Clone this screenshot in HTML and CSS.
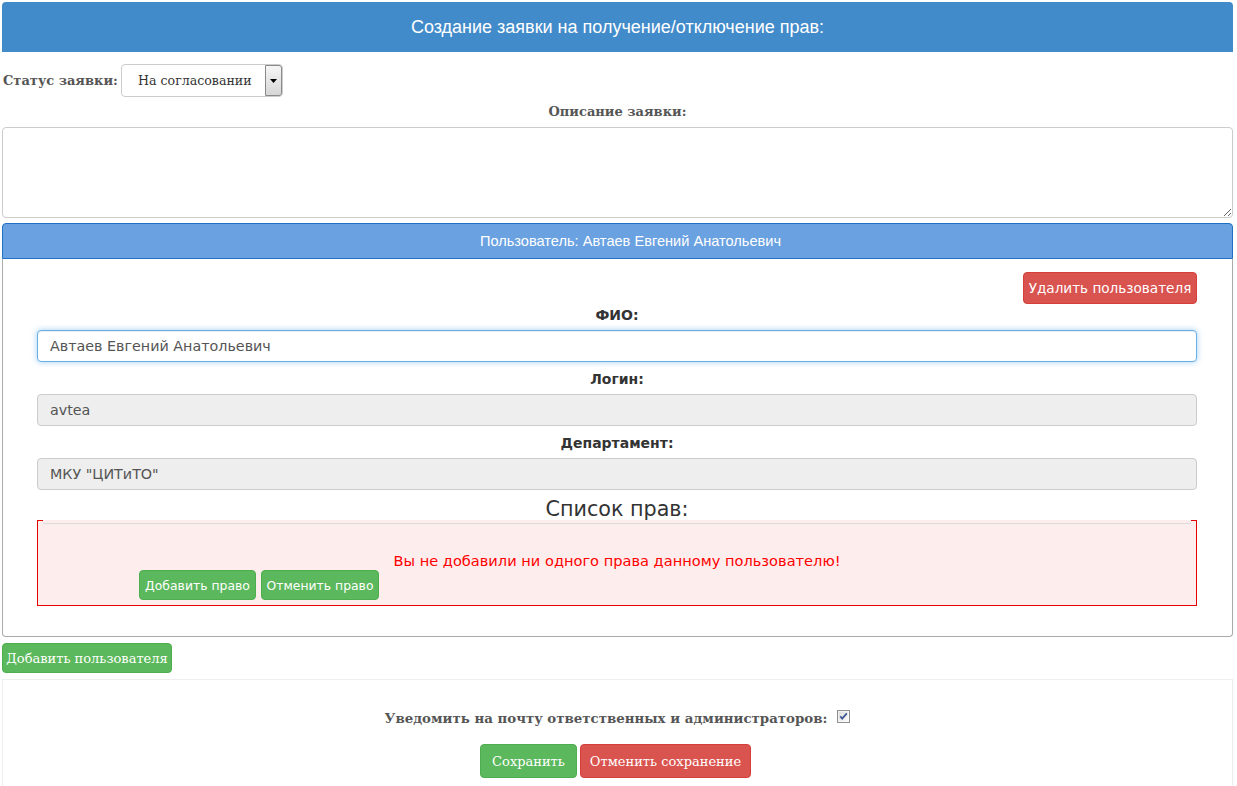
FILE: index.html
```html
<!DOCTYPE html>
<html lang="ru">
<head>
<meta charset="utf-8">
<title>Создание заявки</title>
<link rel="stylesheet" href="styles.css">
</head>
<body>
<div class="page">
  <div class="title-bar">Создание заявки на получение/отключение прав:</div>

  <div class="status-row">
    <span class="status-label">Статус заявки:</span>
    <div class="select">
      <span class="select-text">На согласовании</span>
      <span class="select-arrow"><svg width="7" height="4" viewBox="0 0 7 4"><path d="M0 0H7L3.5 4Z" fill="#000"/></svg></span>
    </div>
  </div>

  <div class="desc-label">Описание заявки:</div>
  <textarea class="desc"></textarea>

  <div class="user-panel">
    <div class="user-head">Пользователь: Автаев Евгений Анатольевич</div>
    <div class="user-body">
      <div class="del-row"><button class="btn btn-red btn-sans del-btn">Удалить пользователя</button></div>

      <div class="field-label first">ФИО:</div>
      <input class="field field-focus" value="Автаев Евгений Анатольевич">

      <div class="field-label">Логин:</div>
      <input class="field field-ro" value="avtea" readonly>

      <div class="field-label">Департамент:</div>
      <input class="field field-ro" value="МКУ &quot;ЦИТиТО&quot;" readonly>

      <div class="rights-title">Список прав:</div>
      <div class="rights-box">
        <div class="rights-top">
          <span class="tick"></span>
          <span class="top-line"></span>
          <span class="tick"></span>
        </div>
        <div class="rights-msg">Вы не добавили ни одного права данному пользователю!</div>
        <div class="rights-btns">
          <button class="btn btn-green btn-sans small-btn add-right">Добавить право</button>
          <button class="btn btn-green btn-sans small-btn cancel-right">Отменить право</button>
        </div>
      </div>
    </div>
  </div>

  <div class="add-row"><button class="btn btn-green btn-serif add-btn">Добавить пользователя</button></div>

  <div class="bottom-box">
    <div class="notify-row">
      <span class="notify-label">Уведомить на почту ответственных и администраторов:</span>
      <span class="checkbox"><svg width="13" height="13" viewBox="0 0 13 13"><defs><linearGradient id="cbg" x1="0" y1="0" x2="1" y2="1"><stop offset="0" stop-color="#dcdcdc"/><stop offset="1" stop-color="#fbfbfb"/></linearGradient></defs><rect x="0.5" y="0.5" width="12" height="12" fill="#fff" stroke="#8f8f8f"/><rect x="1.5" y="1.5" width="10" height="10" fill="url(#cbg)"/><path d="M3.2 6.3L5.2 8.6L9.8 3.4" stroke="#3d5592" stroke-width="1.7" fill="none"/></svg></span>
    </div>
    <div class="save-row">
      <button class="btn btn-green btn-serif save-btn">Сохранить</button>
      <button class="btn btn-red btn-serif cancel-btn">Отменить сохранение</button>
    </div>
  </div>
</div>
</body>
</html>
```
FILE: styles.css
```css
* { box-sizing: border-box; }

body {
  margin: 0;
  background: #fff;
  font-family: "DejaVu Sans", Verdana, sans-serif;
  color: #333;
}

.page {
  margin: 2px 4px 0 2px;
}

.title-bar {
  height: 50px;
  background: #428bca;
  color: #fff;
  font: 18px/50px "Liberation Sans", Arial, sans-serif;
  text-align: center;
  border-radius: 4px 4px 0 0;
}

.status-row {
  display: flex;
  align-items: center;
  margin-top: 12px;
  height: 33px;
}

.status-label {
  font: bold 13px "DejaVu Serif", serif;
  color: #555;
  margin-left: 1px;
  margin-right: 5px;
  width: 113px;
  white-space: nowrap;
}

.select {
  width: 162px;
  height: 33px;
  border: 1px solid #ccc;
  border-radius: 4px;
  display: flex;
  align-items: center;
  background: #fff;
}

.select-text {
  padding-left: 16px;
  font: 12.6px "DejaVu Serif", serif;
  color: #333;
  flex: 1;
}

.select-arrow {
  width: 17px;
  height: 31px;
  border: 1px solid #8a8a8a;
  border-radius: 0 3px 3px 0;
  background: linear-gradient(#f6f6f6, #d6d6d6);
  display: flex;
  align-items: center;
  justify-content: center;
}

.desc-label {
  margin-top: 5px;
  height: 20px;
  text-align: center;
  font: bold 13px/20px "DejaVu Serif", serif;
  color: #555;
}

.desc {
  display: block;
  width: 100%;
  height: 91px;
  margin: 5px 0 0;
  border: 1px solid #ccc;
  border-radius: 4px;
  resize: vertical;
}

.user-panel {
  margin-top: 5px;
}

.user-head {
  height: 36px;
  background: #6aa1e0;
  border: 1px solid #1f6fc5;
  border-radius: 4px 4px 0 0;
  color: #fff;
  font: 14.6px/34px "Liberation Sans", Arial, sans-serif;
  text-align: center;
  padding-left: 26px;
}

.user-body {
  border: 1px solid #ababab;
  border-top: none;
  border-radius: 0 0 4px 4px;
  padding: 13px 35px 30px 34px;
}

.del-row {
  display: flex;
  justify-content: flex-end;
}

.btn {
  border: 1px solid;
  border-radius: 4px;
  color: #fff;
  cursor: pointer;
  white-space: nowrap;
  display: inline-flex;
  align-items: center;
  justify-content: center;
  padding: 0;
}

.btn-green {
  background: #5cb85c;
  border-color: #4cae4c;
}

.btn-red {
  background: #d9534f;
  border-color: #d43f3a;
}

.btn-sans {
  font-family: "DejaVu Sans", Verdana, sans-serif;
}

.btn-serif {
  font-family: "DejaVu Serif", serif;
}

.del-btn {
  width: 174px;
  height: 32px;
  font-size: 13.6px;
}

.field-label {
  margin: 7px 0 5px;
  height: 20px;
  font: bold 14px/20px "DejaVu Sans", Verdana, sans-serif;
  color: #333;
  text-align: center;
}

.field-label.first {
  margin-top: 1px;
}

.field {
  display: block;
  width: 100%;
  height: 32px;
  border: 1px solid #ccc;
  border-radius: 4px;
  padding: 0 12px;
  font: 14.3px "DejaVu Sans", Verdana, sans-serif;
  color: #555;
  background: #fff;
  outline: none;
}

.field-focus {
  border-color: #66afe9;
  box-shadow: inset 0 1px 1px rgba(0, 0, 0, 0.075), 0 0 6px rgba(102, 175, 233, 0.6);
}

.field-ro {
  background: #eee;
}

.rights-title {
  margin-top: 9px;
  height: 21px;
  font: 20.7px/21px "DejaVu Sans", Verdana, sans-serif;
  color: #333;
  text-align: center;
}

.rights-box {
  border: 1px solid #e60000;
  border-top: none;
  background: #fdeded;
  padding-bottom: 5px;
}

.rights-top {
  display: flex;
  height: 5px;
}

.tick {
  width: 5px;
  height: 1px;
  background: #e60000;
}

.top-line {
  flex: 1;
  margin-top: 3px;
  height: 1px;
  background: #dcdcdc;
}

.rights-msg {
  margin-top: 27px;
  font: 14.6px/18px "DejaVu Sans", Verdana, sans-serif;
  color: #f00;
  text-align: center;
}

.rights-btns {
  display: flex;
  gap: 5px;
  padding-left: 101px;
}

.small-btn {
  height: 30px;
  font-size: 12.4px;
}

.add-right { width: 117px; }
.cancel-right { width: 118px; }

.add-row {
  margin-top: 6px;
}

.add-btn {
  width: 170px;
  height: 30px;
  font-size: 13px;
}

.bottom-box {
  margin-top: 6px;
  border: 1px solid #eee;
  padding: 28px 0 40px;
}

.notify-row {
  display: flex;
  justify-content: center;
  align-items: center;
  gap: 10px;
  height: 20px;
}

.notify-label {
  font: bold 13.35px/20px "DejaVu Serif", serif;
  color: #555;
}

.checkbox {
  display: inline-flex;
  width: 13px;
  height: 13px;
  margin-top: -4px;
}

.save-row {
  margin-top: 16px;
  display: flex;
  justify-content: center;
  gap: 3px;
  padding-right: 4px;
}

.save-btn {
  width: 97px;
  height: 34px;
  font-size: 13px;
}

.cancel-btn {
  width: 171px;
  height: 34px;
  font-size: 13px;
}
```
